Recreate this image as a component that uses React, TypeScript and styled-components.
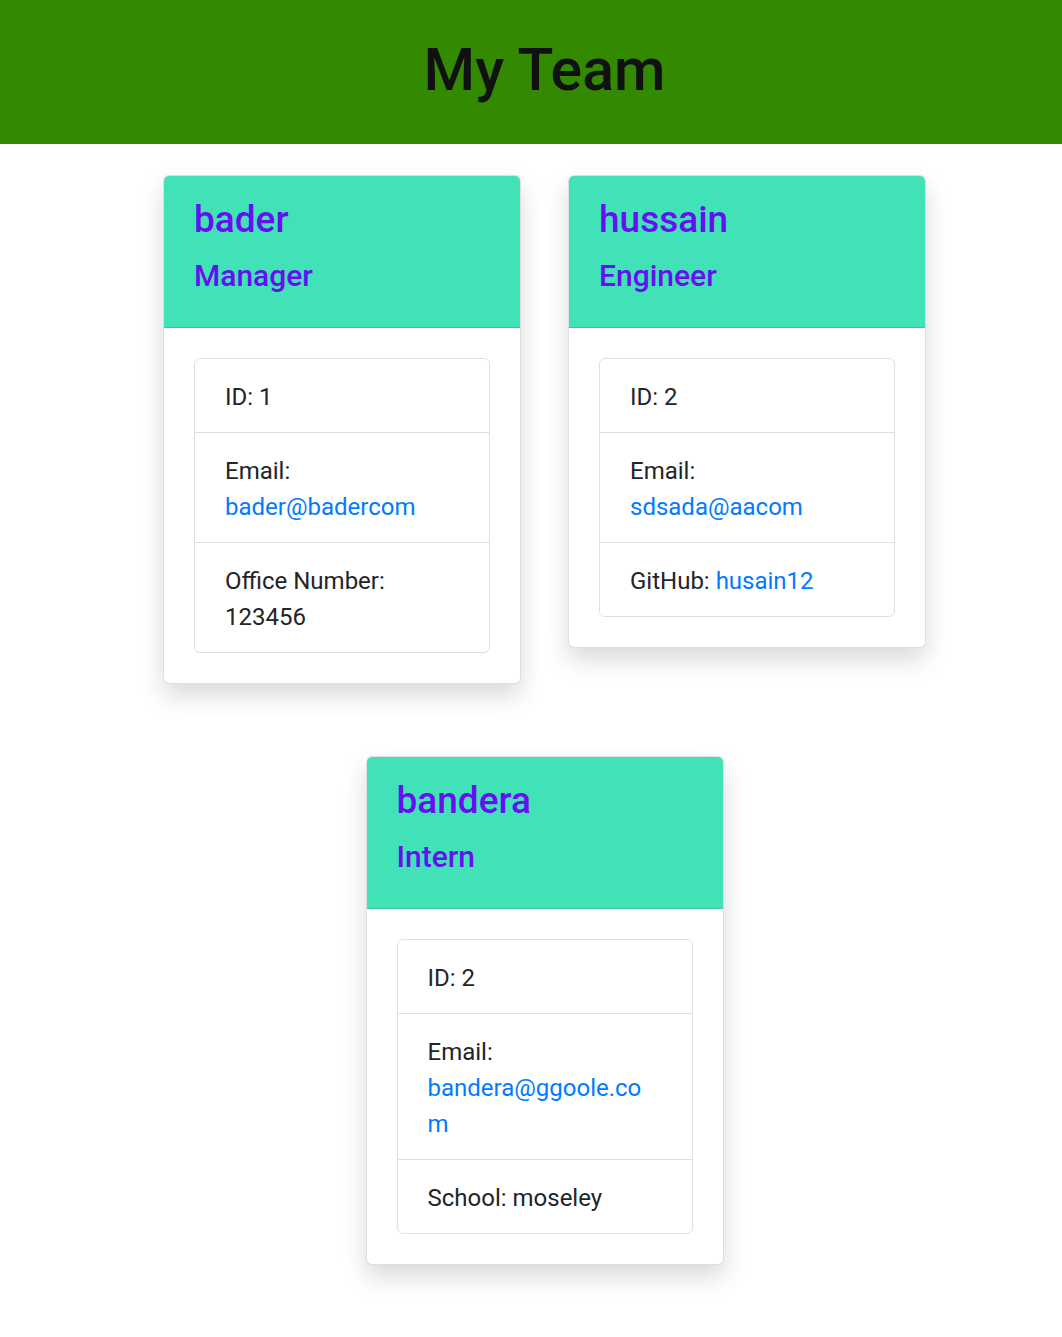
import React from "react";
import styled, { createGlobalStyle } from "styled-components";

const GlobalStyle = createGlobalStyle`
  * { box-sizing: border-box; }
  body {
    margin: 0;
    background: #ffffff;
    color: #212529;
    font-family: Roboto, "Liberation Sans", sans-serif;
    font-size: 24px;
    line-height: 1.5;
  }
`;

const Banner = styled.header`
  background: #338a00;
  height: 144px;
  padding: 35px 0 0 27px;
  text-align: center;
`;

const Title = styled.h1`
  margin: 0;
  font-size: 59px;
  font-weight: 500;
  line-height: 1.2;
  color: #111111;
`;

const Board = styled.main`
  display: flex;
  flex-wrap: wrap;
  justify-content: center;
  align-items: flex-start;
  column-gap: 47px;
  row-gap: 72px;
  padding: 31px 0 60px 27px;
`;

const Card = styled.section`
  width: 358px;
  background: #ffffff;
  border: 1px solid rgba(0, 0, 0, 0.125);
  border-radius: 6px;
  box-shadow: 0 12px 24px rgba(0, 0, 0, 0.15);
  overflow: hidden;
`;

const CardHeader = styled.div`
  background: #42e2b8;
  border-bottom: 1px solid rgba(0, 0, 0, 0.125);
  padding: 21px 30px;
`;

const Name = styled.h2`
  margin: 0 0 16px;
  font-size: 37px;
  font-weight: 500;
  line-height: 45px;
  color: #6610f2;
`;

const Role = styled.h3`
  margin: 0 0 12px;
  font-size: 30px;
  font-weight: 500;
  line-height: 36px;
  color: #6610f2;
`;

const CardBody = styled.div`
  padding: 30px;
`;

const List = styled.ul`
  margin: 0;
  padding: 0;
  list-style: none;
  border: 1px solid rgba(0, 0, 0, 0.125);
  border-radius: 6px;
`;

const Item = styled.li`
  padding: 20px 30px 17px;
  line-height: 36px;
  overflow-wrap: break-word;
  & + & {
    border-top: 1px solid rgba(0, 0, 0, 0.125);
  }
`;

const Link = styled.a`
  color: #007bff;
  text-decoration: none;
`;

type Member = {
  name: string;
  role: string;
  id: number;
  email: string;
  extraLabel: string;
  extraValue: string;
  extraLink?: string;
};

const team: Member[] = [
  { name: "bader", role: "Manager", id: 1, email: "bader@badercom", extraLabel: "Office Number:", extraValue: "123456" },
  { name: "hussain", role: "Engineer", id: 2, email: "sdsada@aacom", extraLabel: "GitHub:", extraValue: "husain12", extraLink: "https://github.com/husain12" },
  { name: "bandera", role: "Intern", id: 2, email: "bandera@ggoole.com", extraLabel: "School:", extraValue: "moseley" },
];

function MemberCard({ m }: { m: Member }) {
  return (
    <Card>
      <CardHeader>
        <Name>{m.name}</Name>
        <Role>{m.role}</Role>
      </CardHeader>
      <CardBody>
        <List>
          <Item>ID: {m.id}</Item>
          <Item>
            Email: <Link href={`mailto:${m.email}`}>{m.email}</Link>
          </Item>
          <Item>
            {m.extraLabel}{" "}
            {m.extraLink ? <Link href={m.extraLink}>{m.extraValue}</Link> : m.extraValue}
          </Item>
        </List>
      </CardBody>
    </Card>
  );
}

export default function App() {
  return (
    <>
      <GlobalStyle />
      <Banner>
        <Title>My Team</Title>
      </Banner>
      <Board>
        {team.map((m) => (
          <MemberCard key={m.name} m={m} />
        ))}
      </Board>
    </>
  );
}
